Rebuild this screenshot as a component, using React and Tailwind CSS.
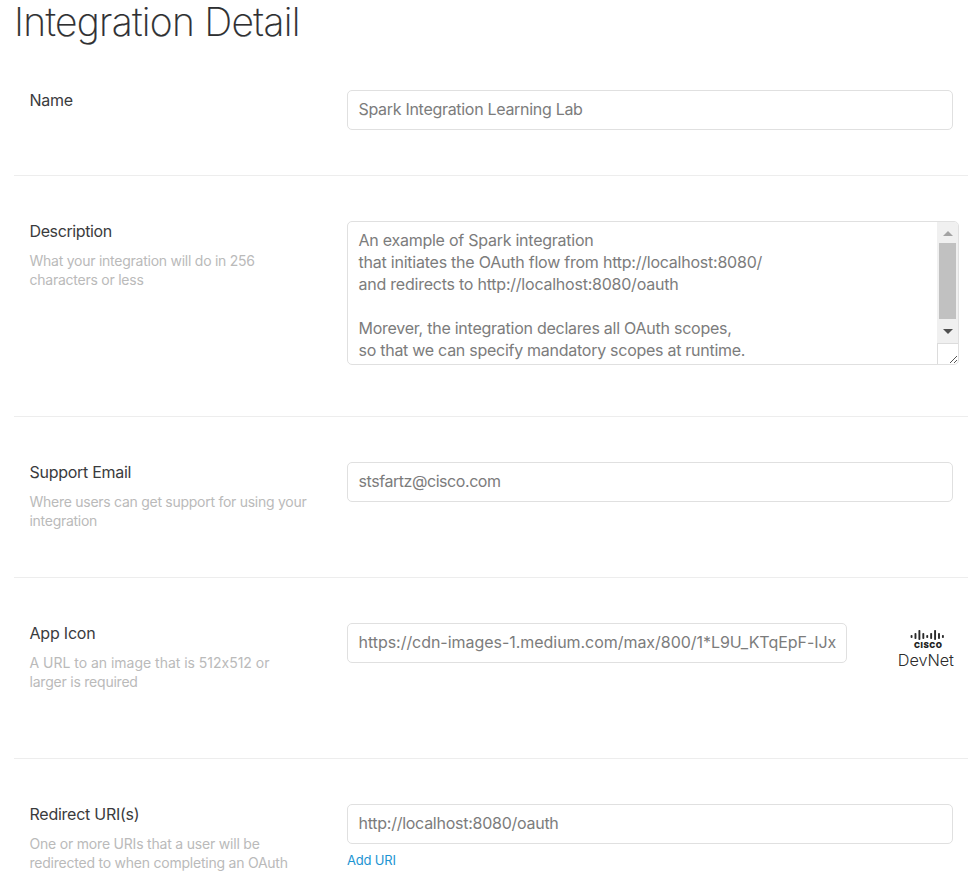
const rowClass = "flex border-b border-[#ededed] pt-[45px] pl-[15px]";
const inputClass =
  "flex h-10 items-center rounded-[5px] border border-[#e0e0e0] pl-[10.5px] pb-[2px] text-base text-[#7c7c7c] whitespace-pre";

function Label({ title, titleClass, lines = [] }) {
  return (
    <div className="w-[318px] shrink-0">
      <div className={`pl-[0.5px] text-base leading-5 text-[#3a3b3d] ${titleClass}`}>{title}</div>
      <div className="mt-[10px] pl-[0.5px] text-sm leading-[19px] text-[#bababa]">
        {lines.map(([text, cls]) => (
          <div key={text} className={`whitespace-pre ${cls}`}>{text}</div>
        ))}
      </div>
    </div>
  );
}

function ScrollBar() {
  return (
    <div className="flex w-[21px] flex-col">
      <div className="flex h-[121px] flex-col items-center rounded-tr-[4px] bg-[#f0f0f0]">
        <svg className="mt-[9px]" width="10" height="5" viewBox="0 0 10 5">
          <path d="M0 5L5 0L10 5Z" fill="#a3a3a3" />
        </svg>
        <div className="mt-[7px] h-[76px] w-[17px] bg-[#c1c1c1]" />
        <svg className="mt-[10px]" width="10" height="5" viewBox="0 0 10 5">
          <path d="M0 0L5 5L10 0Z" fill="#505050" />
        </svg>
      </div>
      <div className="flex h-[21px] items-end justify-end border-t border-l border-[#dcdcdc]">
        <svg width="9" height="8" viewBox="0 0 9 8" shapeRendering="crispEdges" stroke="#555" strokeWidth="1">
          <path d="M0.5 7.5L7.5 0.5M4.5 7.5L7.5 4.5" fill="none" />
        </svg>
      </div>
    </div>
  );
}

const bars = [
  [0, 6, 3], [4, 4, 6], [8, 1, 10], [12, 4, 6], [16, 6, 3],
  [20, 4, 6], [24, 1, 10], [28, 4, 6], [32, 6, 3],
];

function Logo() {
  return (
    <svg className="-mt-px ml-[48px] shrink-0" width="64" height="48" viewBox="0 0 64 48">
      {bars.map(([x, y, h]) => (
        <rect key={x} x={15.6 + x * 0.98} y={7 + y} width="1.9" height={h} rx="0.8" fill="#2a2a2a" />
      ))}
      <text x="19" y="26" fontFamily="Inter" fontWeight="900" fontSize="8" textLength="28" fill="#222">CISCO</text>
      <text x="2.8" y="43.5" fontFamily="Inter" fontWeight="300" fontSize="16.3" textLength="56" fill="#2c2c2c">DevNet</text>
    </svg>
  );
}

export default function App() {
  return (
    <div className="h-[875px] overflow-hidden bg-white pr-[7px] pl-[14px] font-['Inter',sans-serif] [font-feature-settings:'calt'_0]">
      <h1 className="h-[45px] text-[39px] leading-[43px] font-extralight tracking-[-0.71px] text-[#2e2f31] [-webkit-text-stroke:0.2px_#2e2f31]">Integration Detail</h1>

      <section className={`${rowClass} h-[131px]`}>
        <Label title="Name" titleClass="tracking-[-0.3px]" />
        <div className={`${inputClass} w-[606px] tracking-[-0.3px]`}>Spark Integration Learning Lab</div>
      </section>

      <section className={`${rowClass} h-[241px]`}>
        <Label
          title="Description"
          titleClass="tracking-[-0.39px]"
          lines={[
            ["What your integration will do in 256", "tracking-[-0.25px]"],
            ["characters or less", "tracking-[-0.24px]"],
          ]}
        />
        <div className="flex h-[144px] w-[612px] justify-between rounded-[5px] border border-[#e0e0e0]">
          <div className="pt-[7px] pl-[10.5px] text-base leading-[22px] whitespace-pre text-[#7c7c7c]">
            <div className="tracking-[-0.25px]">An example of Spark integration</div>
            <div className="tracking-[-0.23px]">that initiates the OAuth flow from http://localhost:8080/</div>
            <div className="tracking-[-0.23px]">and redirects to http://localhost:8080/oauth</div>
            <div className="h-[22px]" />
            <div className="tracking-[-0.25px]">Morever, the integration declares all OAuth scopes,</div>
            <div className="tracking-[-0.27px]">so that we can specify mandatory scopes at runtime.</div>
          </div>
          <ScrollBar />
        </div>
      </section>

      <section className={`${rowClass} h-[161px]`}>
        <Label
          title="Support Email"
          titleClass="tracking-[-0.28px]"
          lines={[
            ["Where users can get support for using your", "tracking-[-0.27px]"],
            ["integration", "tracking-[-0.28px]"],
          ]}
        />
        <div className={`${inputClass} w-[606px] tracking-[-0.44px]`}>stsfartz@cisco.com</div>
      </section>

      <section className={`${rowClass} h-[181px]`}>
        <Label
          title="App Icon"
          titleClass="tracking-[-0.2px]"
          lines={[
            ["A URL to an image that is 512x512 or", "tracking-[-0.02px]"],
            ["larger is required", "tracking-[-0.22px]"],
          ]}
        />
        <div className={`${inputClass} w-[500px] tracking-[-0.04px]`}>https://cdn-images-1.medium.com/max/800/1*L9U_KTqEpF-IJx</div>
        <Logo />
      </section>

      <section className="flex pt-[45px] pl-[15px]">
        <Label
          title="Redirect URI(s)"
          titleClass="tracking-[-0.25px]"
          lines={[
            ["One or more URIs that a user will be", "tracking-[-0.2px]"],
            ["redirected to when completing an OAuth", "tracking-[-0.23px]"],
          ]}
        />
        <div>
          <div className={`${inputClass} w-[606px] tracking-[-0.26px]`}>http://localhost:8080/oauth</div>
          <a className="mt-[7px] block text-[13px] leading-[18px] tracking-[-0.2px] text-[#1c94d2]">Add URI</a>
        </div>
      </section>
    </div>
  );
}
